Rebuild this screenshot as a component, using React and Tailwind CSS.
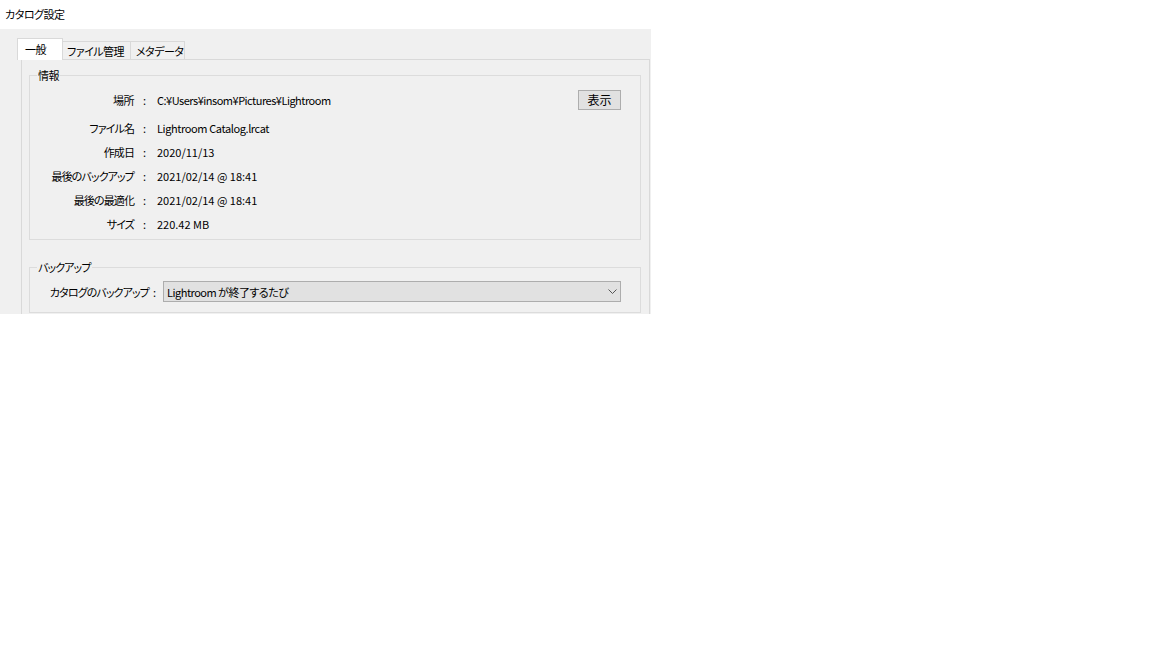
export default function App() {
  const rows = [
    ["ファイル名", "Lightroom Catalog.lrcat", "tracking-[-0.4px]"],
    ["作成日", "2020/11/13", "tracking-[0px]"],
    ["最後のバックアップ", "2021/02/14 @ 18:41", "tracking-[0px]"],
    ["最後の最適化", "2021/02/14 @ 18:41", "tracking-[0px]"],
    ["サイズ", "220.42 MB", "tracking-[0px]"],
  ];
  return (
    <div className="w-[1152px] h-[648px] bg-white text-black font-['Noto_Sans_CJK_JP',sans-serif] [font-feature-settings:'palt'] text-[11px] leading-[16px] tracking-[-0.5px] whitespace-nowrap">
      <div className="h-[28px] pl-[5px] flex items-center">カタログ設定</div>
      <div className="mt-[1px] w-[651px] h-[285px] bg-[#f0f0f0] pt-[9px] overflow-hidden">
        <div className="flex items-end pl-[17px]">
          <div className="relative z-10 -mb-[1px] h-[22px] w-[46px] bg-white border border-b-0 border-[#d9d9d9] flex items-center pl-[7px] pb-[2px]">一般</div>
          <div className="h-[18px] w-[68px] border-t border-r border-[#d9d9d9] flex items-center pl-[4px]">ファイル管理</div>
          <div className="h-[18px] w-[54px] border-t border-r border-[#d9d9d9] flex items-center pl-[5px]">メタデータ</div>
        </div>
        <div className="ml-[21px] w-[629px] h-[260px] border border-[#d9d9d9] pl-[7px] pt-[15px]">
          <div className="relative w-[612px] h-[165px] border border-[#dcdcdc] pt-[14px]">
            <span className="absolute left-[7px] -top-[9px] px-[1px] bg-[#f0f0f0]">情報</span>
            <div className="flex items-center h-[20px]">
              <span className="w-[104px] flex justify-end">場所</span>
              <span className="w-[23px] pl-[9px]">:</span>
              <span className="flex-1">C:¥Users¥insom¥Pictures¥Lightroom</span>
              <button className="w-[43px] h-[20px] mr-[19px] bg-[#e1e1e1] border border-[#adadad] flex items-center justify-center text-[12px] tracking-normal">表示</button>
            </div>
            <div className="mt-[6px] flex flex-col">
              {rows.map(([k, v, t]) => (
                <div key={k} className="flex items-center h-[24px]">
                  <span className="w-[104px] flex justify-end tracking-[-0.9px]">{k}</span>
                  <span className="w-[23px] pl-[9px]">:</span>
                  <span className={t}>{v}</span>
                </div>
              ))}
            </div>
          </div>
          <div className="relative mt-[27px] w-[612px] h-[46px] border border-[#dcdcdc] pt-[13px]">
            <span className="absolute left-[7px] -top-[9px] px-[1px] bg-[#f0f0f0] tracking-[-0.9px]">バックアップ</span>
            <div className="flex items-center h-[21px]">
              <span className="w-[119px] flex justify-end tracking-[-0.9px]">カタログのバックアップ</span>
              <span className="w-[14px] pl-[4px]">:</span>
              <div className="w-[458px] h-[21px] bg-[#e1e1e1] border border-[#adadad] flex items-center pl-[3px] pr-[3px]">
                <span className="flex-1">Lightroom が終了するたび</span>
                <svg width="9" height="5" viewBox="0 0 9 5" className="text-[#555]">
                  <polyline points="0.5,0.5 4.5,4.5 8.5,0.5" fill="none" stroke="currentColor" strokeWidth="1" />
                </svg>
              </div>
            </div>
          </div>
        </div>
      </div>
    </div>
  );
}
